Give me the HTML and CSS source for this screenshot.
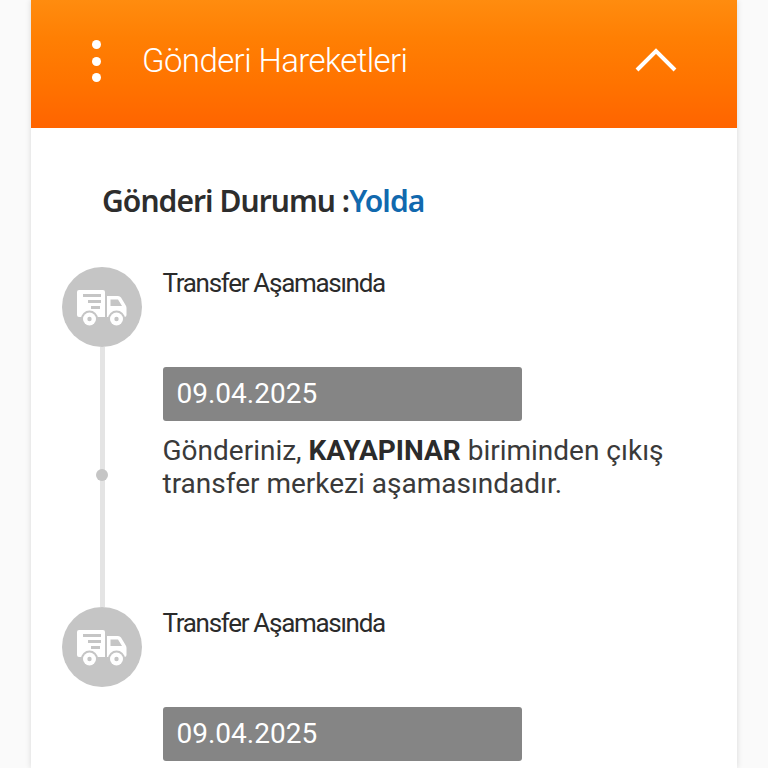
FILE: index.html
```html
<!DOCTYPE html>
<html lang="tr">
<head>
<meta charset="utf-8">
<title>Gönderi Hareketleri</title>
<link rel="stylesheet" href="styles.css">
</head>
<body>
<svg class="defs" width="0" height="0" aria-hidden="true">
  <symbol id="truck" viewBox="0 0 50 37">
    <path fill="#fff" fill-rule="evenodd" d="M2 0H26Q28 0 28 2V27H2Q0 27 0 25V2Q0 0 2 0ZM6 4V7H24V4ZM11 10V13H24V10ZM14 16V19H23V16Z"/>
    <path fill="#fff" fill-rule="evenodd" d="M30 6H41Q43 6 44 7.500L48.500 15Q49.500 16.500 49.500 18V25Q49.500 27 47.500 27H30ZM33.500 9.500V16H45L41 9.500Z"/>
    <circle cx="12.500" cy="29" r="8.500" fill="#c5c5c5"/>
    <circle cx="39.500" cy="29" r="8.500" fill="#c5c5c5"/>
    <circle cx="12.500" cy="29" r="6.500" fill="#fff"/>
    <circle cx="39.500" cy="29" r="6.500" fill="#fff"/>
    <circle cx="12.500" cy="29" r="2.200" fill="#c5c5c5"/>
    <circle cx="39.500" cy="29" r="2.200" fill="#c5c5c5"/>
  </symbol>
</svg>
<main class="card">
  <header class="head">
    <div class="kebab"><i></i><i></i><i></i></div>
    <h1 class="head-title">Gönderi Hareketleri</h1>
    <svg class="chev" viewBox="0 0 42 24" aria-hidden="true"><path d="M2 22L21 3L40 22" fill="none" stroke="#fff" stroke-width="4"/></svg>
  </header>
  <h2 class="status">Gönderi Durumu :<span class="status-val">Yolda</span></h2>
  <ol class="timeline">
    <li class="step">
      <div class="rail">
        <div class="badge"><svg class="truck"><use href="#truck"/></svg></div>
        <div class="line"><span class="dot"></span></div>
      </div>
      <div class="info">
        <h3 class="step-title">Transfer Aşamasında</h3>
        <div class="date">09.04.2025</div>
        <p class="desc">Gönderiniz, <b>KAYAPINAR</b> biriminden çıkış transfer merkezi aşamasındadır.</p>
      </div>
    </li>
    <li class="step">
      <div class="rail">
        <div class="badge"><svg class="truck"><use href="#truck"/></svg></div>
      </div>
      <div class="info">
        <h3 class="step-title">Transfer Aşamasında</h3>
        <div class="date">09.04.2025</div>
      </div>
    </li>
  </ol>
</main>
</body>
</html>
```
FILE: styles.css
```css
html, body { margin: 0; height: 768px; overflow: hidden; background: #fafafa; }
.defs { position: absolute; }
.card {
  width: 706px; height: 768px; margin-left: 31px; background: #fff; overflow: hidden;
  box-shadow: 0 0 6px rgba(0,0,0,.14);
  font-family: Roboto, sans-serif;
}
.head {
  height: 128px; box-sizing: border-box; display: flex; align-items: center;
  padding: 0 60px 6px 60px;
  background: linear-gradient(#ff8c0f 0%, #ff7f03 30%, #ff7300 65%, #ff6400 100%);
  color: #fff;
}
.kebab { width: 10px; display: flex; flex-direction: column; align-items: center; gap: 7.500px; margin-right: 41px; }
.kebab i { width: 9px; height: 9px; border-radius: 50%; background: #fff; display: block; }
.head-title { flex: 1; margin: 0; font: 300 33px/40px Roboto, sans-serif; letter-spacing: -.6px; }
.chev { width: 42px; height: 24px; margin-top: -2px; }
.status { margin: 53px 0 0 71px; font: 600 30px/40px "Noto Sans", sans-serif; letter-spacing: -.95px; color: #2d2d2d; }
.status-val { color: #1169ae; }
.timeline { list-style: none; margin: 46px 0 0 31px; padding: 0; }
.step { display: flex; gap: 20.500px; height: 340px; }
.rail { width: 80px; display: flex; flex-direction: column; align-items: center; }
.badge { width: 80px; height: 80px; flex: none; border-radius: 50%; background: #c5c5c5; display: flex; align-items: center; justify-content: center; }
.truck { width: 50px; height: 37px; margin-top: 2px; }
.line { width: 5px; flex: 1; background: #e4e4e4; display: flex; align-items: center; justify-content: center; }
.dot { width: 12px; height: 12px; border-radius: 50%; background: #c5c5c5; flex: none; margin-top: -5px; }
.info { width: 520px; }
.step-title { margin: 0; font: 400 26px/32px Roboto, sans-serif; letter-spacing: -1.3px; color: #2b2b2b; }
.date { width: 359px; height: 54px; box-sizing: border-box; margin-top: 68px; padding-left: 14px; background: #858585; border-radius: 3px; color: #fff; font-size: 28px; line-height: 54px; }
.desc { margin: 13px 0 0; font-size: 28px; line-height: 33px; color: #3a3a3a; width: 520px; }
.desc b { color: #2b2b2b; font-weight: 700; }
```
